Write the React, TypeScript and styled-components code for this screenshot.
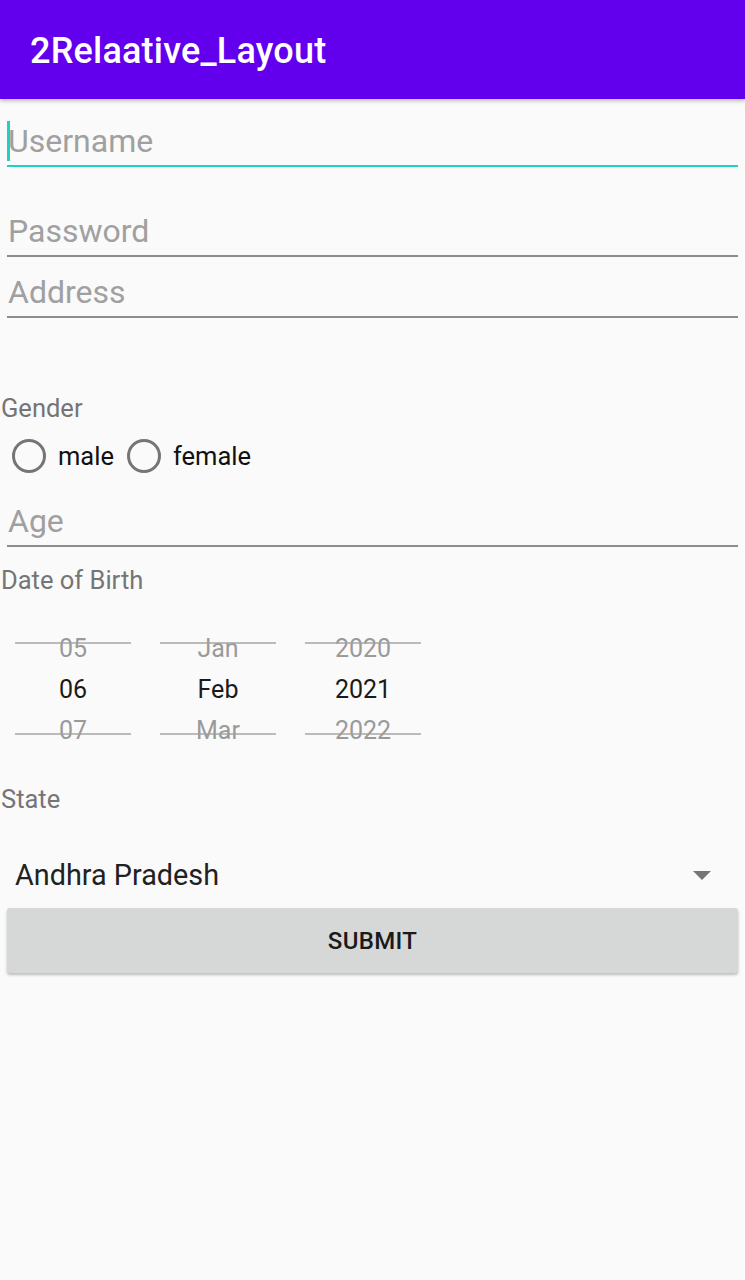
import React from "react";
import styled, { createGlobalStyle } from "styled-components";

const Global = createGlobalStyle`
  html, body { margin: 0; padding: 0; background: #fafafa; }
  body { font-family: Roboto, "Noto Sans", Arial, sans-serif; }
  * { box-sizing: border-box; }
`;

const Page = styled.div`
  width: 745px;
  min-height: 1280px;
  background: #fafafa;
  display: flex;
  flex-direction: column;
`;

const AppBar = styled.header`
  height: 99px;
  background: #6200ee;
  display: flex;
  align-items: center;
  padding-left: 30px;
  padding-top: 2px;
  box-shadow: 0 2px 4px rgba(0, 0, 0, 0.25);
  position: relative;
  z-index: 1;
`;

const Title = styled.h1`
  margin: 0;
  color: #ffffff;
  font-family: Roboto, sans-serif;
  font-weight: 500;
  font-size: 36px;
  letter-spacing: 0.2px;
`;

const Content = styled.main`
  display: flex;
  flex-direction: column;
`;

const Field = styled.div<{ $mt: number; $focused?: boolean }>`
  margin: ${(p) => p.$mt}px 7px 0 7px;
  height: 52px;
  display: flex;
  align-items: center;
  border-bottom: 2px solid ${(p) => (p.$focused ? "#1ed2c2" : "#8c8c8c")};
  position: relative;
`;

const Hint = styled.span`
  font-family: Roboto, sans-serif;
  font-size: 32px;
  color: #a0a0a0;
  padding-left: 1px;
  padding-top: 2px;
`;

const Cursor = styled.span`
  position: absolute;
  left: 0;
  top: 6px;
  width: 3px;
  height: 40px;
  background: #1ed2c2;
`;

const Label = styled.div<{ $mt: number }>`
  margin-top: ${(p) => p.$mt}px;
  padding-left: 1px;
  height: 30px;
  line-height: 30px;
  font-family: Roboto, sans-serif;
  font-size: 25.5px;
  color: #757575;
`;

const RadioRow = styled.div`
  margin-top: 9px;
  height: 48px;
  display: flex;
  align-items: center;
`;

const RadioItem = styled.label<{ $pl: number }>`
  display: flex;
  align-items: center;
  gap: 12px;
  padding-left: ${(p) => p.$pl}px;
  font-family: Roboto, sans-serif;
  font-size: 25.5px;
  color: #111;
`;

const RadioCircle = styled.span`
  width: 34px;
  height: 34px;
  border-radius: 50%;
  border: 3px solid #757575;
`;

const PickerRow = styled.div`
  margin-top: 33px;
  padding-left: 15px;
  display: flex;
  gap: 29px;
`;

const PickerColumn = styled.div`
  width: 116px;
  display: flex;
  flex-direction: column;
  position: relative;
  &::before,
  &::after {
    content: "";
    position: absolute;
    left: 0;
    right: 0;
    height: 2px;
    background: rgba(160, 160, 160, 0.7);
  }
  &::before { top: 14px; }
  &::after { top: 105px; }
`;

const PickerItem = styled.div<{ $selected?: boolean }>`
  height: 41px;
  line-height: 41px;
  text-align: center;
  font-family: Roboto, sans-serif;
  font-size: 25px;
  color: ${(p) => (p.$selected ? "#1a1a1a" : "#9a9a9a")};
`;

const Spinner = styled.div`
  margin-top: 32px;
  height: 56px;
  display: flex;
  align-items: center;
  justify-content: space-between;
  padding: 2px 34px 0 15px;
`;

const SpinnerText = styled.span`
  font-family: Roboto, sans-serif;
  font-size: 28.8px;
  color: #212121;
`;

const Arrow = styled.span`
  width: 0;
  height: 0;
  border-left: 9px solid transparent;
  border-right: 9px solid transparent;
  border-top: 9px solid #757575;
`;

const SubmitButton = styled.button`
  margin: 6px 7px 0 7px;
  height: 65px;
  flex-shrink: 0;
  border: none;
  border-radius: 3px;
  background: #d6d7d7;
  box-shadow: 0 2px 3px rgba(0, 0, 0, 0.25);
  font-family: Roboto, sans-serif;
  font-weight: 500;
  font-size: 24px;
  color: #1a1a1a;
  letter-spacing: 0.3px;
`;

const pickers = [
  ["05", "06", "07"],
  ["Jan", "Feb", "Mar"],
  ["2020", "2021", "2022"],
];

export default function App() {
  return (
    <Page>
      <Global />
      <AppBar>
        <Title>2Relaative_Layout</Title>
      </AppBar>
      <Content>
        <Field $mt={16} $focused>
          <Cursor />
          <Hint>Username</Hint>
        </Field>
        <Field $mt={38}>
          <Hint>Password</Hint>
        </Field>
        <Field $mt={9}>
          <Hint>Address</Hint>
        </Field>
        <Label $mt={75}>Gender</Label>
        <RadioRow>
          <RadioItem $pl={12}>
            <RadioCircle />
            male
          </RadioItem>
          <RadioItem $pl={13}>
            <RadioCircle />
            female
          </RadioItem>
        </RadioRow>
        <Field $mt={15}>
          <Hint>Age</Hint>
        </Field>
        <Label $mt={18}>Date of Birth</Label>
        <PickerRow>
          {pickers.map((col, i) => (
            <PickerColumn key={i}>
              {col.map((v, j) => (
                <PickerItem key={v} $selected={j === 1}>
                  {v}
                </PickerItem>
              ))}
            </PickerColumn>
          ))}
        </PickerRow>
        <Label $mt={33}>State</Label>
        <Spinner>
          <SpinnerText>Andhra Pradesh</SpinnerText>
          <Arrow />
        </Spinner>
        <SubmitButton>SUBMIT</SubmitButton>
      </Content>
    </Page>
  );
}
